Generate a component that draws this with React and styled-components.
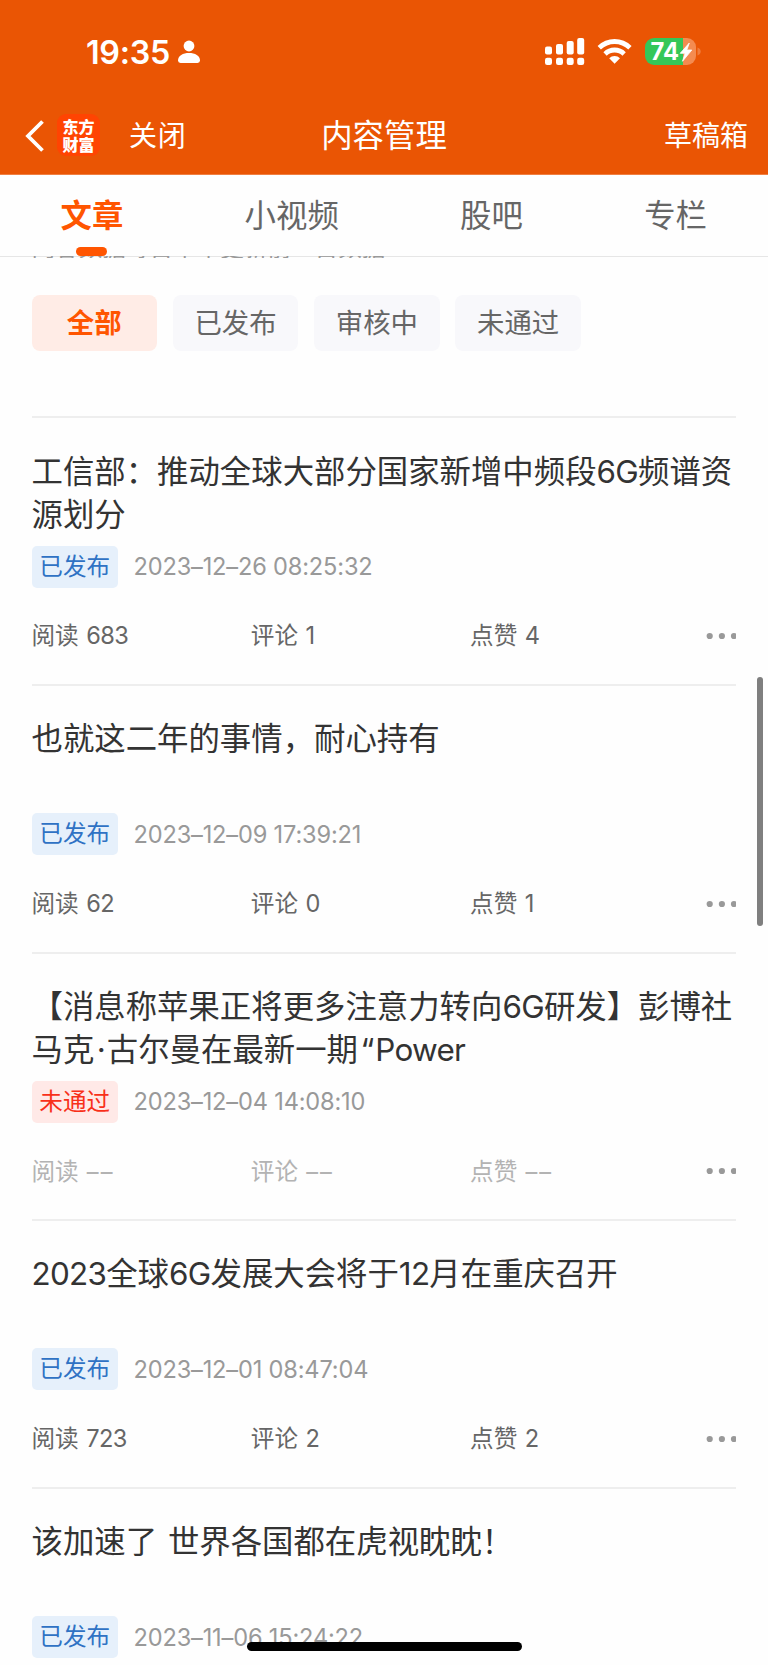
import styled, { createGlobalStyle } from 'styled-components';

const tabs = ['文章', '小视频', '股吧', '专栏'];
const filters = ['全部', '已发布', '审核中', '未通过'];

const articles = [
  { title: '工信部：推动全球大部分国家新增中频段6G频谱资源划分', status: '已发布', date: '2023–12–26 08:25:32', reads: '683', comments: '1', likes: '4' },
  { title: '也就这二年的事情，耐心持有', status: '已发布', date: '2023–12–09 17:39:21', reads: '62', comments: '0', likes: '1' },
  { title: '【消息称苹果正将更多注意力转向6G研发】彭博社马克·古尔曼在最新一期“Power', status: '未通过', date: '2023–12–04 14:08:10', rejected: true },
  { title: '2023全球6G发展大会将于12月在重庆召开', status: '已发布', date: '2023–12–01 08:47:04', reads: '723', comments: '2', likes: '2' },
  { title: '该加速了 世界各国都在虎视眈眈！', status: '已发布', date: '2023–11–06 15:24:22' },
];

function StatusIcons() {
  return (
    <svg width='160' height='30' viewBox='0 0 160 30' fill='#fff'>
      {/* dual sim signal */}
      <rect x='1' y='9.5' width='7' height='8' rx='2' />
      <rect x='12' y='7' width='7' height='10.5' rx='2' />
      <rect x='22.7' y='4' width='7' height='13.5' rx='2' />
      <rect x='33.2' y='1' width='7' height='16.5' rx='2' />
      <rect x='1' y='20.7' width='7' height='7.3' rx='2.2' />
      <rect x='12' y='20.7' width='7' height='7.3' rx='2.2' />
      <rect x='22.7' y='20.7' width='7' height='7.3' rx='2.2' />
      <rect x='33.2' y='20.7' width='7' height='7.3' rx='2.2' />
      {/* wifi */}
      <path d='M53.6 9a24 24 0 0 1 34 0l-3.3 3.6a19.4 19.4 0 0 0-27.4 0z' />
      <path d='M59.4 15.2a15.9 15.9 0 0 1 22.4 0l-3.3 3.500a11.3 11.3 0 0 0-15.800 0z' />
      <path d='M65.2 21.2a7.7 7.7 0 0 1 10.800 0l-5.400 5.600z' />
      {/* battery */}
      <path d='M110 1h29v27h-29a9 9 0 0 1-9-9v-9a9 9 0 0 1 9-9z' fill='#34c759' />
      <path d='M139 1h4a9 9 0 0 1 9 9v9a9 9 0 0 1-9 9h-4z' fill='#f48b50' />
      <path d='M153.500 10.500q3.200 1.200 3.200 4t-3.200 4z' fill='#f07c3d' />
      <text x='106.500' y='23.200' fontFamily='Inter, sans-serif' fontSize='23.800' fontWeight='700' textLength='28.500' lengthAdjust='spacingAndGlyphs'>
        74
      </text>
      <path d='M145.300 6l-9.100 10.300h4.900l-2.600 8 9.300-11.300h-5z' stroke='#fff' strokeWidth='0.8' strokeLinejoin='round' />
    </svg>
  );
}

// latin runs and some punctuation need their own spacing next to the chinese glyphs
function renderTitle(title) {
  return title.split(/([A-Za-z0-9]+|[·“])/).map((part, i) => {
    if (/^[A-Za-z0-9]/.test(part)) return <Latin key={i}>{part}</Latin>;
    if (part === '·' || part === '“') return <Punctuation key={i}>{part}</Punctuation>;
    return part;
  });
}

function Stat({ label, value }) {
  return (
    <span>
      {label} <Value $empty={!value}>{value || '––'}</Value>
    </span>
  );
}

function Article({ article }) {
  const { title, status, date, rejected, reads, comments, likes } = article;
  return (
    <Item>
      <Title>{renderTitle(title)}</Title>
      <Meta>
        <Tag $rejected={rejected}>{status}</Tag>
        <time>{date}</time>
      </Meta>
      <Stats $muted={rejected}>
        <Stat label='阅读' value={reads} />
        <Stat label='评论' value={comments} />
        <Stat label='点赞' value={likes} />
        <More viewBox='0 0 30 8'>
          <circle cx='3.7' cy='4' r='3.1' />
          <circle cx='15.9' cy='4' r='3.1' />
          <circle cx='28' cy='4' r='3.1' />
        </More>
      </Stats>
    </Item>
  );
}

export default function App() {
  return (
    <>
      <GlobalStyle />
      <Page>
        <Header>
          <StatusBar>
            <Clock>19:35</Clock>
            <PersonIcon viewBox='0 0 22 24'>
              <circle cx='11' cy='6' r='5.4' />
              <path d='M0 20.6C0 15.6 5 13 11 13s11 2.6 11 7.6Q22 23 19.5 23h-17Q0 23 0 20.6z' />
            </PersonIcon>
            <StatusIcons />
          </StatusBar>
          <NavBar>
            <NavLeft>
              <BackIcon viewBox='0 0 20 32'>
                <path d='M17.5 1.500L3 16l14.500 14.500' />
              </BackIcon>
              <Logo>
                <span>东方</span>
                <span>财富</span>
              </Logo>
              <Close>关闭</Close>
            </NavLeft>
            <NavTitle>内容管理</NavTitle>
            <NavRight>草稿箱</NavRight>
          </NavBar>
        </Header>
        <Tabs>
          {tabs.map((tab, i) => (
            <Tab key={tab} $active={i === 0}>
              {tab}
            </Tab>
          ))}
        </Tabs>
        <Content>
          <Notice>内容数据每日中午更新前一日数据</Notice>
          <Filters>
            {filters.map((filter, i) => (
              <Filter key={filter} $active={i === 0}>
                {filter}
              </Filter>
            ))}
          </Filters>
          {articles.map((article) => (
            <Article key={article.date} article={article} />
          ))}
        </Content>
        <ScrollThumb />
        <HomeIndicator />
      </Page>
    </>
  );
}

const GlobalStyle = createGlobalStyle`
  * {
    box-sizing: border-box;
  }

  body {
    margin: 0;
    background-color: #fff;
    font-family: Inter, 'Noto Sans CJK SC', sans-serif;
  }
`;

const Page = styled.div`
  position: relative;
  display: flex;
  flex-direction: column;
  width: 768px;
  height: 1665px;
  overflow: hidden;
  background-color: #fefefe;
`;

const Header = styled.header`
  flex: none;
  height: 175px;
  color: #fff;
  background-color: #ea5504;
  border-bottom: 1px solid #f07f42;
`;

const StatusBar = styled.div`
  display: flex;
  align-items: center;
  height: 100px;
  padding: 4px 64px 0 86px;

  > svg:last-child {
    margin-left: auto;
  }
`;

const Clock = styled.span`
  width: 92px;
  font-size: 32.3px;
  font-weight: 600;
  letter-spacing: -0.3px;
`;

const PersonIcon = styled.svg`
  width: 22px;
  height: 24px;
  fill: #fff;
`;

const NavBar = styled.nav`
  display: grid;
  grid-template-columns: 1fr auto 1fr;
  align-items: center;
  height: 72px;
  padding: 0 20px 0 25px;
  font-size: 28px;
`;

const NavLeft = styled.div`
  display: flex;
  align-items: center;
`;

const BackIcon = styled.svg`
  width: 20px;
  height: 32px;
  margin-right: 12px;
  fill: none;
  stroke: #fff;
  stroke-width: 3.8;
`;

const Logo = styled.div`
  display: flex;
  flex-direction: column;
  align-items: center;
  justify-content: center;
  width: 43px;
  height: 42px;
  margin: 0 29px 2px 0;
  border-radius: 9px;
  font-family: 'Noto Sans CJK SC', sans-serif;
  font-size: 16px;
  font-weight: 900;
  line-height: 18px;
  background-color: #ff4402;
`;

const Close = styled.span`
  padding-bottom: 4px;
  letter-spacing: 0.8px;
`;

const NavTitle = styled.h1`
  margin: 0;
  padding: 0 5px 5px 0;
  font-size: 31.4px;
  font-weight: 400;
`;

const NavRight = styled.span`
  justify-self: end;
  padding-bottom: 4px;
`;

const Tabs = styled.div`
  display: flex;
  flex: none;
  justify-content: space-between;
  height: 82px;
  padding: 0 61px 0 60.5px;
  border-bottom: 1px solid #e6e6e6;
`;

const Tab = styled.div`
  display: flex;
  flex-direction: column;
  align-items: center;
  justify-content: space-between;
  padding-top: 18px;
  font-size: 31.4px;
  line-height: 46px;
  font-weight: ${(props) => (props.$active ? 700 : 400)};
  color: ${(props) => (props.$active ? '#ff5500' : '#666')};

  &::after {
    content: '';
    width: 31px;
    height: 9px;
    border-radius: 5px;
    background-color: ${(props) => (props.$active ? '#ff5500' : 'transparent')};
  }
`;

const Content = styled.main`
  padding: 0 32px 0 31.5px;
`;

/* scrolled under the tabs, only the bottom edge of the line is visible */
const Notice = styled.div`
  display: flex;
  align-items: flex-end;
  height: 2px;
  margin: -1px 0 37.3px;
  overflow: hidden;
  font-size: 23.6px;
  line-height: 21.5px;
  color: #999;
`;

const Filters = styled.div`
  display: flex;
  gap: 15.8px;
  margin-bottom: 65.2px;
`;

const Filter = styled.div`
  width: 125.5px;
  height: 56px;
  border-radius: 8px;
  font-size: 27.4px;
  line-height: 56px;
  text-align: center;
  font-weight: ${(props) => (props.$active ? 700 : 400)};
  color: ${(props) => (props.$active ? '#ff5500' : '#666')};
  background-color: ${(props) => (props.$active ? '#ffece6' : '#f8f8fb')};
`;

const Item = styled.article`
  height: 267.6px;
  padding-top: 32.2px;
  border-top: 2px solid #eee;
`;

const Title = styled.h2`
  height: 86px;
  margin: 0 0 9px;
  font-size: 31.4px;
  font-weight: 400;
  line-height: 43px;
  word-spacing: 2px;
  color: #333;
`;

const Latin = styled.span`
  letter-spacing: -0.7px;
`;

const Punctuation = styled.span`
  padding: 0 1px 0 2.5px;
`;

const Meta = styled.div`
  display: flex;
  align-items: center;
  gap: 15.5px;
  margin-bottom: 31.8px;
  font-size: 23.6px;
  color: #999;

  time {
    letter-spacing: -0.17px;
  }
`;

const Tag = styled.span`
  width: 86.5px;
  height: 42px;
  border-radius: 5px;
  line-height: 42px;
  text-align: center;
  color: ${(props) => (props.$rejected ? '#f8301a' : '#2f72c4')};
  background-color: ${(props) => (props.$rejected ? '#ffe9e7' : '#e6f0fb')};
`;

const Stats = styled.div`
  display: grid;
  grid-template-columns: 219.3px 219.3px 1fr 30px;
  align-items: center;
  font-size: 23.6px;
  line-height: 33px;
  color: ${(props) => (props.$muted ? '#b3b3b3' : '#666')};
`;

const Value = styled.span`
  margin-left: ${(props) => (props.$empty ? 1.5 : 0.8)}px;
  letter-spacing: ${(props) => (props.$empty ? 2 : -0.5)}px;
`;

const More = styled.svg`
  width: 30px;
  height: 8px;
  fill: #999;
`;

const ScrollThumb = styled.div`
  position: absolute;
  top: 677px;
  right: 5.5px;
  width: 5.5px;
  height: 249px;
  border-radius: 3px;
  background-color: #7f7f7f;
`;

const HomeIndicator = styled.div`
  position: absolute;
  bottom: 14.5px;
  left: 247px;
  width: 275px;
  height: 9px;
  border-radius: 5px;
  background-color: #000;
`;
